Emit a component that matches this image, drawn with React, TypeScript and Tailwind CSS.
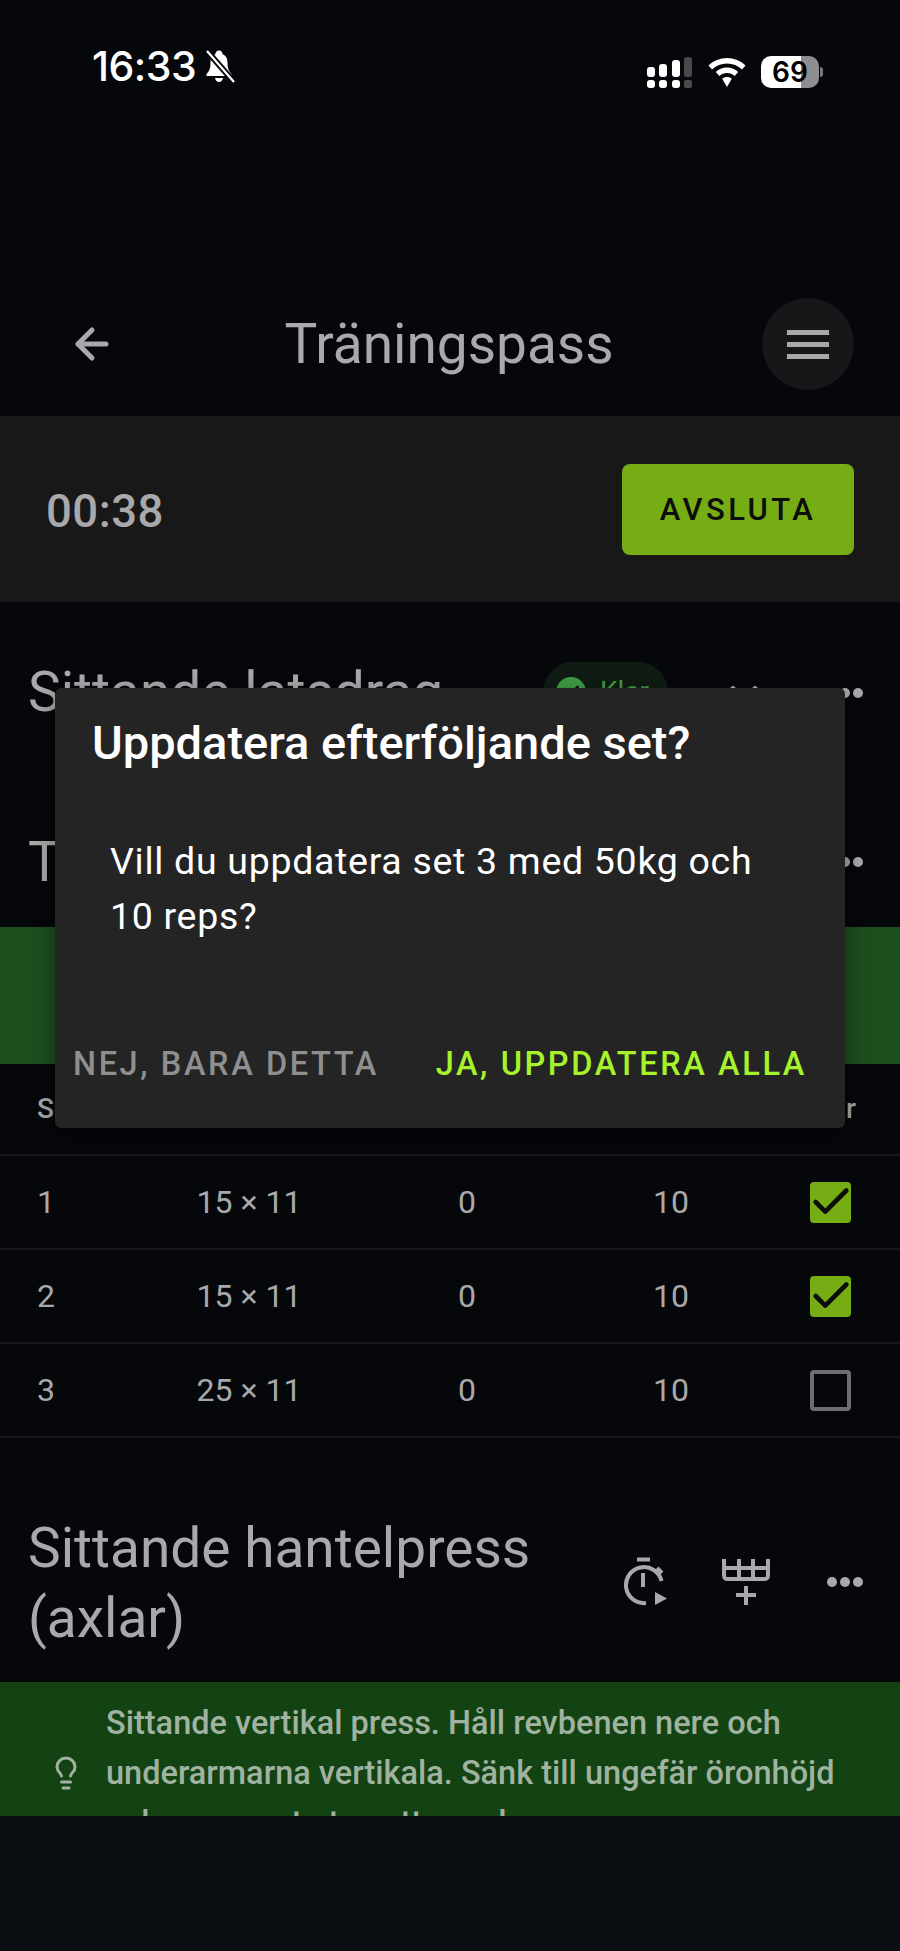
import { ArrowLeft, Check, Lightbulb } from "lucide-react";

const font = { fontFamily: "Roboto, sans-serif" };

const rows = [
  { set: "1", weight: "15 × 11", rest: "0", reps: "10", done: true },
  { set: "2", weight: "15 × 11", rest: "0", reps: "10", done: true },
  { set: "3", weight: "25 × 11", rest: "0", reps: "10", done: false },
];

function SignalIcon() {
  return (
    <svg width="46" height="31" viewBox="0 0 46 31" fill="#fff">
      <rect x="0" y="10" width="8" height="10" rx="3" />
      <rect x="12" y="7" width="8" height="13" rx="3" />
      <rect x="25" y="3" width="8" height="17" rx="3" />
      <rect x="37" y="0" width="8" height="20" rx="3" fill="#4a4a4c" />
      <rect x="0" y="23" width="8" height="8" rx="3" />
      <rect x="12" y="23" width="8" height="8" rx="3" />
      <rect x="25" y="23" width="8" height="8" rx="3" />
      <rect x="37" y="23" width="8" height="8" rx="2" fill="#4a4a4c" />
    </svg>
  );
}

function WifiIcon() {
  return (
    <svg width="38" height="29" viewBox="0 0 38 29" fill="#fff">
      <path d="M19 0C12 0 5.500 2.800 0.500 7.500L4 11.500C8 7.700 13.300 5.500 19 5.500S30 7.700 34 11.500L37.500 7.500C32.500 2.800 26 0 19 0Z" />
      <path d="M19 9.500C14.700 9.500 10.800 11.100 7.800 14L11.300 18C13.400 16.100 16.100 15 19 15S24.600 16.100 26.700 18L30.200 14C27.200 11.100 23.300 9.500 19 9.500Z" />
      <path d="M19 19C17.200 19 15.500 19.600 14.200 20.800L19 29L23.800 20.800C22.500 19.600 20.800 19 19 19Z" />
    </svg>
  );
}

function BellOffIcon() {
  return (
    <svg width="32" height="34" viewBox="0 0 32 34" fill="#fff">
      <path d="M15 1.500C12.500 1.500 11.500 3.500 11.300 5.200C7.500 6.800 6.500 10 6.500 14C6.500 19 5.500 22 2.500 25V27H27.500V25C24.500 22 23.500 19 23.500 14C23.500 10 22.500 6.800 18.700 5.200C18.500 3.500 17.500 1.500 15 1.500Z" />
      <path d="M11 29C11.500 31.500 13 33 15 33S18.500 31.500 19 29Z" />
      <path d="M3 2L30 33" stroke="#05070b" strokeWidth="6" />
      <path d="M3 2L30 33" stroke="#fff" strokeWidth="2.200" />
    </svg>
  );
}

function StatusBar() {
  return (
    <div className="flex h-[90px] items-end justify-between pb-[2px] pl-[92px] pr-[77px] text-white">
      <div className="flex items-center gap-[8px]">
        <span className="text-[41px] leading-[44px] font-medium tracking-[-0.5px]" style={{ fontFamily: "Inter, sans-serif" }}>
          16:33
        </span>
        <BellOffIcon />
      </div>
      <div className="flex items-center gap-[15px]">
        <SignalIcon />
        <WifiIcon />
        <div className="flex items-center gap-[1px]">
          <div className="flex h-[32px] w-[58px] items-center justify-center rounded-[10px] bg-[linear-gradient(90deg,#ffffff_0%,#ffffff_69%,#8e8e90_69%,#8e8e90_100%)] text-[28px] font-semibold text-black" style={{ fontFamily: "Inter, sans-serif" }}>
            69
          </div>
          <div className="h-[10px] w-[3px] rounded-r-full bg-[#77777a]" />
        </div>
      </div>
    </div>
  );
}

function TimerPlayIcon() {
  return (
    <svg width="46" height="50" viewBox="0 0 46 50" fill="none" stroke="#a9a9ab" strokeWidth="4">
      <path d="M14 2.500H27" />
      <path d="M20 16V30" />
      <path d="M38.500 24A18 18 0 1 0 23 46" />
      <path d="M34 11L39 16" />
      <path d="M32 35L44 41.500L32 48Z" fill="#a9a9ab" stroke="none" />
    </svg>
  );
}

function AddSetIcon() {
  return (
    <svg width="48" height="46" viewBox="0 0 48 46" fill="none" stroke="#a9a9ab" strokeWidth="4">
      <path d="M2 0V16C2 19 3 20 6 20H42C45 20 46 19 46 16V0" />
      <path d="M2 9H46" />
      <path d="M17 0V20M31 0V20" />
      <path d="M24 27V46M14 36H34" />
    </svg>
  );
}

function SwapIcon() {
  return (
    <svg width="44" height="40" viewBox="0 0 44 40" fill="none" stroke="#a9a9ab" strokeWidth="4">
      <path d="M11 2V38M2 11L11 2L20 11" />
      <path d="M33 2V38M24 11L33 2L42 11" />
    </svg>
  );
}

function Dots() {
  return (
    <div className="flex gap-[3px]">
      <span className="h-[10px] w-[10px] rounded-full bg-[#a9a9ab]" />
      <span className="h-[10px] w-[10px] rounded-full bg-[#a9a9ab]" />
      <span className="h-[10px] w-[10px] rounded-full bg-[#a9a9ab]" />
    </div>
  );
}

function SetRow({ set, weight, rest, reps, done }: { set: string; weight: string; rest: string; reps: string; done: boolean }) {
  return (
    <div className="flex h-[94px] items-center border-b-2 border-[#16181b] text-[32px] text-[#a9a9ab]">
      <span className="w-[120px] pl-[37px]">{set}</span>
      <span className="w-[258px] text-center">{weight}</span>
      <span className="w-[178px] text-center">{rest}</span>
      <span className="w-[230px] text-center">{reps}</span>
      <div className="flex flex-1 justify-end pr-[49px]">
        {done ? (
          <div className="flex h-[41px] w-[41px] items-center justify-center rounded-[4px] bg-[#76ad14]">
            <Check className="h-[46px] w-[46px] shrink-0 text-[#0c0e0c]" strokeWidth={2.400} />
          </div>
        ) : (
          <div className="h-[41px] w-[41px] rounded-[4px] border-[4px] border-[#6e6e70]" />
        )}
      </div>
    </div>
  );
}

function ConfirmDialog() {
  return (
    <div className="absolute top-[688px] left-[55px] flex h-[440px] w-[790px] flex-col rounded-[6px] bg-[#242424] shadow-[0_8px_24px_rgba(0,0,0,0.4)]">
      <h2 className="mt-[29px] pl-[37px] text-[47px] leading-[52px] font-medium text-white">Uppdatera efterföljande set?</h2>
      <p className="mt-[65px] pl-[55px] pr-[60px] text-[37.500px] leading-[55px] tracking-[0.7px] text-white">
        Vill du uppdatera set 3 med 50kg och 10 reps?
      </p>
      <div className="mt-auto flex items-center justify-between pb-[44px] pl-[18px] pr-[38px] text-[32.500px] leading-[40px] font-medium tracking-[2.600px]">
        <span className="text-[#8f8f8f]">NEJ, BARA DETTA</span>
        <span className="text-[#a6f22b]">JA, UPPDATERA ALLA</span>
      </div>
    </div>
  );
}

export default function App() {
  return (
    <div className="relative flex h-[1951px] w-[900px] flex-col overflow-hidden bg-[#0b0e12]" style={font}>
      <div className="h-[1816px] bg-[#05070b]">
        <StatusBar />

        <header className="mt-[208px] flex h-[118px] items-start pl-[68px] pr-[46px]">
          <ArrowLeft className="mt-[22px] h-[48px] w-[48px] text-[#a9a9ab]" strokeWidth={2.500} />
          <h1 className="flex-1 pt-[16px] pl-[20px] text-center text-[55px] leading-[60px] text-[#a9a9ab]">Träningspass</h1>
          <div className="flex h-[92px] w-[92px] items-center justify-center rounded-full bg-[#161719]">
            <div className="flex w-[42px] flex-col gap-[7px]">
              <span className="h-[5px] bg-[#a9a9ab]" />
              <span className="h-[5px] bg-[#a9a9ab]" />
              <span className="h-[5px] bg-[#a9a9ab]" />
            </div>
          </div>
        </header>

        <div className="flex h-[186px] items-center justify-between bg-[#181818] px-[46px]">
          <span className="pt-[6px] text-[45.500px] font-medium tracking-[0.5px] text-[#a9a9ab]">00:38</span>
          <div className="mt-[1px] flex h-[91px] w-[232px] items-center justify-center rounded-[8px] bg-[#76ad14] pt-[2px] text-[31px] font-medium tracking-[3.400px] text-[#0c0e0c]">
            AVSLUTA
          </div>
        </div>

        <section className="flex h-[168px] items-start justify-between pt-[60px] pl-[28px] pr-[37px]">
          <h3 className="text-[55px] leading-[60px] text-[#a9a9ab]">Sittande latsdrag</h3>
          <div className="flex items-start">
            <div className="flex h-[60px] w-[125px] items-center gap-[14px] rounded-full bg-[#0f1b13] pl-[13px] text-[28px] text-[#3f9a45]">
              <span className="flex h-[30px] w-[30px] items-center justify-center rounded-full bg-[#3f9a45]">
                <Check className="h-[20px] w-[20px] text-[#0c0e0c]" strokeWidth={3} />
              </span>
              Klar
            </div>
            <div className="mt-[24px] ml-[54px]">
              <SwapIcon />
            </div>
            <div className="mt-[26px] ml-[61px]">
              <Dots />
            </div>
          </div>
        </section>

        <section className="flex h-[157px] items-start justify-between pt-[62px] pl-[28px] pr-[37px]">
          <h3 className="text-[55px] leading-[60px] text-[#a9a9ab]">Triceps</h3>
          <div className="pt-[25px]">
            <Dots />
          </div>
        </section>

        <div className="flex h-[137px] items-center bg-[#1c4f1e] pl-[48px]">
          <Lightbulb className="h-[36px] w-[36px] text-[#93ab93]" strokeWidth={2} />
        </div>

        <div className="flex h-[92px] items-center justify-between border-b-2 border-[#16181b] pl-[37px] pr-[44px] text-[28px] font-medium text-[#a9a9ab]">
          <span>Set</span>
          <span>Klar</span>
        </div>

        {rows.map((row) => (
          <SetRow key={row.set} {...row} />
        ))}

        <section className="flex h-[244px] items-start justify-between pt-[75px] pl-[28px] pr-[37px]">
          <h3 className="w-[540px] text-[55px] leading-[70px] text-[#a9a9ab]">Sittande hantelpress (axlar)</h3>
          <div className="flex items-center pt-[44px]">
            <TimerPlayIcon />
            <div className="ml-[53px]">
              <AddSetIcon />
            </div>
            <div className="ml-[57px]">
              <Dots />
            </div>
          </div>
        </section>

        <div className="flex h-[134px] items-start overflow-hidden bg-[#134213] pl-[48px]">
          <Lightbulb className="mt-[73px] h-[36px] w-[36px] shrink-0 text-[#a0b3a0]" strokeWidth={2} />
          <p className="ml-[22px] w-[750px] shrink-0 pt-[16px] text-[32.500px] leading-[50px] font-medium text-[#a0b3a0]">
            Sittande vertikal press. Håll revbenen nere och underarmarna vertikala. Sänk till ungefär öronhöjd och pressa ut utan att svanka ryggen.
          </p>
        </div>
      </div>

      <ConfirmDialog />
    </div>
  );
}
